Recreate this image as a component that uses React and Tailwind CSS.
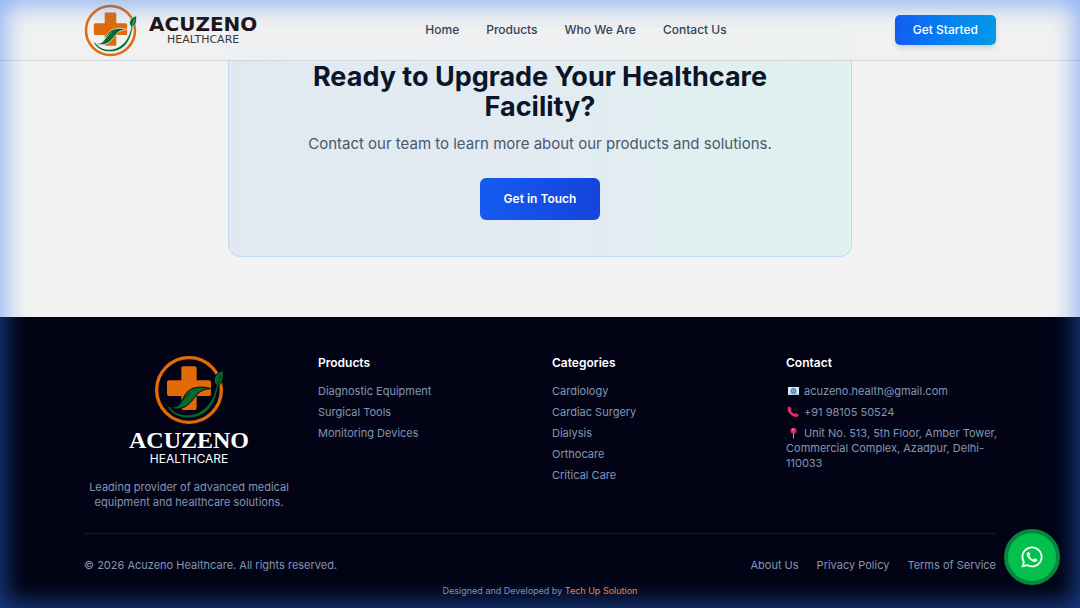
import { FaWhatsapp } from "react-icons/fa";

const navLinks = ["Home", "Products", "Who We Are", "Contact Us"];

const productLinks = [
  "Diagnostic Equipment",
  "Surgical Tools",
  "Monitoring Devices",
];

const categoryLinks = [
  "Cardiology",
  "Cardiac Surgery",
  "Dialysis",
  "Orthocare",
  "Critical Care",
];

const legalLinks = ["About Us", "Privacy Policy", "Terms of Service"];

const LogoMark = ({ className, gap }) => (
  <svg viewBox="100 28 208 210" className={className} aria-hidden="true">
    <circle cx="204" cy="133" r="97" fill="none" stroke="#e36a07" strokeWidth="10" />
    <path
      d="M186 62h36q5 0 5 5v37h37q6 0 6 6v36q0 5-6 5h-37v36q0 6-6 6h-34q-6 0-6-6v-36h-37q-6 0-6-6v-35q0-6 6-6h37V67q0-5 5-5z"
      fill="#e36a07"
    />
    <path
      d="M135 177c12 10 28 10 39 0 12-12 15-32 29-42 16-12 42-14 66-6-20 1-32 7-42 19-16 20-29 38-52 41-12 2-22 0-27-3 17 20 43 25 67 20 38-8 62-39 71-88-12-10-9-32 20-44 3 23-1 39-14 46-6 52-32 87-71 95-38 8-72-6-86-38z"
      fill="#05692c"
      stroke={gap}
      strokeWidth="3"
    />
    <path d="M150 184c28-8 42-30 58-43" fill="none" stroke={gap} strokeWidth="2" />
    <path d="M291 117c2-12 5-20 9-28" fill="none" stroke={gap} strokeWidth="2" />
  </svg>
);

const MailIcon = () => (
  <svg viewBox="0 0 14 12" className="mr-1 inline-block h-3 w-[14px] align-[-2px]" aria-hidden="true">
    <path d="M2 2h11v8H2z" fill="#dfe9f0" />
    <path d="M2 10l4-4 3 0 4 4z" fill="#b5c9d8" />
    <circle cx="7.5" cy="5.8" r="2.9" fill="#3b88c9" />
    <circle cx="7.5" cy="5.8" r="1.1" fill="none" stroke="#a9d3f2" strokeWidth="0.7" />
  </svg>
);

const PhoneIcon = () => (
  <svg viewBox="0 0 14 12" className="mr-1 inline-block h-3 w-[14px] align-[-2px]" aria-hidden="true">
    <path
      d="M2.200 1.100C3 .3 4 .4 4.500 1.200l.9 1.700c.3.600.1 1-.5 1.600.7 1.700 1.900 2.700 3.500 3.300.6-.6 1.100-.8 1.700-.5l1.900 1c.8.5.8 1.400.1 2-1.300 1.200-3.300.9-5.500-.4C4 8.600 2.100 6.400 1.600 3.700c-.2-1.100 0-2 .6-2.600z"
      fill="#dc2c62"
    />
  </svg>
);

const PinIcon = () => (
  <svg viewBox="0 0 14 12" className="mr-1 inline-block h-3 w-[14px] align-[-2px]" aria-hidden="true">
    <path d="M7 6h1v5.500H7z" fill="#9fb0ba" />
    <circle cx="7.500" cy="3.800" r="3" fill="#dc2c62" />
    <circle cx="6.700" cy="2.800" r="0.900" fill="#f48aa9" />
  </svg>
);

const FooterColumn = ({ title, links }) => (
  <div>
    <h3 className="mb-[11px] text-xs leading-5 font-semibold text-white">{title}</h3>
    <ul className="flex flex-col gap-[6px]">
      {links.map((link) => (
        <li key={link}>
          <a href="#" className="block hover:text-white">
            {link}
          </a>
        </li>
      ))}
    </ul>
  </div>
);

const Header = () => (
  <header className="sticky top-0 z-20 border-b border-[#d3d6d8] bg-[#f1f1f1]/85">
    <div className="mx-auto flex h-[60px] max-w-[960px] items-center justify-between px-6">
      <a href="#" className="flex items-center gap-3">
        <LogoMark className="size-[53px]" gap="#eef0f3" />
        <span className="flex flex-col items-center text-[#1c1418]">
          <span className="font-['DejaVu_Sans',sans-serif] text-xl leading-5 font-bold">
            ACUZENO
          </span>
          <span className="font-['DejaVu_Sans',sans-serif] text-[11px] leading-3 text-[#39363a]">
            HEALTHCARE
          </span>
        </span>
      </a>
      <nav className="flex gap-[27px] text-xs font-medium text-[#344256]">
        {navLinks.map((link) => (
          <a key={link} href="#" className="hover:text-blue-600">
            {link}
          </a>
        ))}
      </nav>
      <button className="h-[30px] rounded-[5px] bg-linear-to-r from-[#155bf0] via-[#0780f0] to-[#039be8] px-[18px] text-xs font-medium text-white shadow-md">
        Get Started
      </button>
    </div>
  </header>
);

const CallToAction = () => (
  <section className="-mt-9 px-6 pb-[60px]">
    <div className="mx-auto max-w-[624px] rounded-xl border border-[#c1d7f3] bg-linear-to-r from-[#e1e8f2] via-[#e2ebf1] to-[#dff2ef] p-9 text-center">
      <h2 className="text-[27px] leading-[30px] font-bold text-[#0b1528]">
        Ready to Upgrade Your Healthcare Facility?
      </h2>
      <p className="mt-[11px] text-[15px] leading-[21px] text-[#4a586c]">
        Contact our team to learn more about our products and solutions.
      </p>
      <button className="mt-6 h-[42px] rounded-md bg-linear-to-r from-[#155bf0] to-[#1444dc] px-6 text-xs font-semibold text-white">
        Get in Touch
      </button>
    </div>
  </section>
);

const Footer = () => (
  <footer className="bg-[#020415] text-[11px] leading-[15px] text-[#8396b2]">
    <div className="mx-auto max-w-[960px] px-6 pt-9 pb-3">
      <div className="grid grid-cols-4 gap-6">
        <div className="flex flex-col items-center pt-[2px] text-center">
          <LogoMark className="size-[70px]" gap="#020415" />
          <span className="mt-[3px] font-['Liberation_Serif',serif] text-2xl leading-6 font-bold text-white">
            ACUZENO
          </span>
          <span className="text-xs leading-[14px] text-white">HEALTHCARE</span>
          <p className="mt-[14px]">
            Leading provider of advanced medical equipment and healthcare
            solutions.
          </p>
        </div>
        <FooterColumn title="Products" links={productLinks} />
        <FooterColumn title="Categories" links={categoryLinks} />
        <div>
          <h3 className="mb-[11px] text-xs leading-5 font-semibold text-white">Contact</h3>
          <ul className="-mr-3 flex flex-col gap-[6px]">
            <li>
              <MailIcon />
              acuzeno.health@gmail.com
            </li>
            <li>
              <PhoneIcon />
              +91 98105 50524
            </li>
            <li>
              <PinIcon />
              Unit No. 513, 5th Floor, Amber Tower, Commercial Complex, Azadpur,
              Delhi-110033
            </li>
          </ul>
        </div>
      </div>
      <div className="mt-[23px] flex items-center justify-between border-t border-[#131b2a] pt-6">
        <p>© 2026 Acuzeno Healthcare. All rights reserved.</p>
        <div className="flex gap-[18px]">
          {legalLinks.map((link) => (
            <a key={link} href="#" className="hover:text-white">
              {link}
            </a>
          ))}
        </div>
      </div>
      <p className="mt-[10px] text-center text-[9px]">
        Designed and Developed by{" "}
        <a href="#" className="text-[#f58a2c]">
          Tech Up Solution
        </a>
      </p>
    </div>
  </footer>
);

const App = () => {
  return (
    <div className="min-h-screen bg-[#f2f2f2] font-['Inter',sans-serif]">
      <Header />
      <main>
        <CallToAction />
      </main>
      <Footer />
      <a
        href="#"
        aria-label="Chat on WhatsApp"
        className="fixed right-5 bottom-[23px] z-40 flex size-14 items-center justify-center rounded-full border-4 border-[#07873c] bg-[#04c14e] text-white"
      >
        <FaWhatsapp className="size-6" />
      </a>
      {/* blue glow round the window edge */}
      <div className="pointer-events-none fixed inset-0 z-30 shadow-[inset_0_0_22px_6px_rgba(45,120,245,0.48)]" />
    </div>
  );
};

export default App;
